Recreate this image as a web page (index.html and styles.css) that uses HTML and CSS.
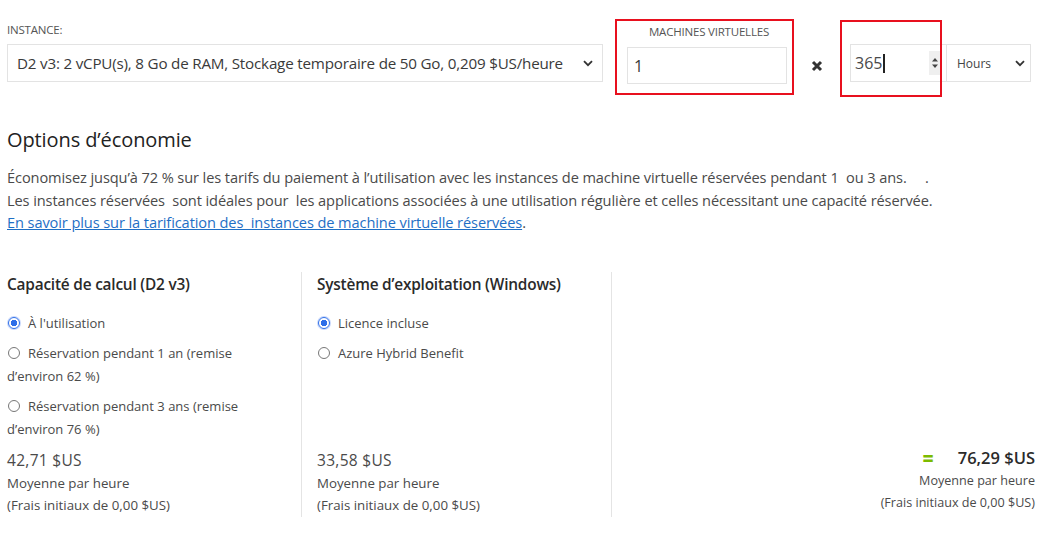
FILE: index.html
```html
<!DOCTYPE html>
<html lang="fr">
<head>
<meta charset="utf-8">
<title>Options d'économie</title>
<link rel="stylesheet" href="styles.css">
</head>
<body>
<div class="page">
  <div class="top">
    <div class="instance">
      <div class="label">INSTANCE:</div>
      <div class="select wide">
        <span class="sel-text">D2 v3: 2 vCPU(s), 8 Go de RAM, Stockage temporaire de 50 Go, 0,209 $US/heure</span>
        <svg class="chev" width="10" height="7" viewBox="0 0 10 7"><path d="M1 1.2 L5 5.2 L9 1.2" fill="none" stroke="#333" stroke-width="1.8"/></svg>
      </div>
    </div>
    <div class="vm-box">
      <div class="label center">MACHINES VIRTUELLES</div>
      <div class="input vm-input">1</div>
    </div>
    <div class="times">
      <svg width="12" height="12" viewBox="0 0 12 12"><path d="M2 2 L10 10 M10 2 L2 10" stroke="#333" stroke-width="3"/></svg>
    </div>
    <div class="dur">
      <div class="input num-input">
        <span>365</span><span class="caret"></span>
        <span class="spin">
          <svg width="8" height="14" viewBox="0 0 8 14"><path d="M1 5.5 L4 2 L7 5.5 Z M1 8.5 L4 12 L7 8.5 Z" fill="#444"/></svg>
        </span>
      </div>
      <div class="select hours">
        <span class="sel-text small">Hours</span>
        <svg class="chev" width="10" height="7" viewBox="0 0 10 7"><path d="M1 1.2 L5 5.2 L9 1.2" fill="none" stroke="#333" stroke-width="1.8"/></svg>
      </div>
      <div class="mark"></div>
    </div>
  </div>

  <h2 class="title">Options d’économie</h2>
  <p class="intro">
    Économisez jusqu’à 72 % sur les tarifs du paiement à l’utilisation avec les instances de machine virtuelle réservées pendant 1&nbsp; ou 3 ans.&nbsp;&nbsp;&nbsp;&nbsp; .<br>
    Les instances réservées&nbsp; sont idéales pour&nbsp; les applications associées à une utilisation régulière et celles nécessitant une capacité réservée.<br>
    <a href="#">En savoir plus sur la tarification des&nbsp; instances de machine virtuelle réservées</a>.
  </p>

  <div class="cols">
    <div class="col first">
      <h3>Capacité de calcul (D2 v3)</h3>
      <div class="opt"><span class="radio on"></span><span>À l'utilisation</span></div>
      <div class="opt wrap"><span class="radio"></span><span>Réservation pendant 1 an (remise</span></div>
      <div class="opt cont">d’environ 62 %)</div>
      <div class="opt wrap"><span class="radio"></span><span>Réservation pendant 3 ans (remise</span></div>
      <div class="opt cont">d’environ 76 %)</div>
      <div class="price">
        <div class="amount">42,71 $US</div>
        <div>Moyenne par heure</div>
        <div>(Frais initiaux de 0,00 $US)</div>
      </div>
    </div>
    <div class="col">
      <h3>Système d’exploitation (Windows)</h3>
      <div class="opt"><span class="radio on"></span><span>Licence incluse</span></div>
      <div class="opt"><span class="radio"></span><span>Azure Hybrid Benefit</span></div>
      <div class="price">
        <div class="amount">33,58 $US</div>
        <div>Moyenne par heure</div>
        <div>(Frais initiaux de 0,00 $US)</div>
      </div>
    </div>
    <div class="total">
      <div class="total-line"><span class="eq">=</span><span class="total-amount">76,29 $US</span></div>
      <div>Moyenne par heure</div>
      <div>(Frais initiaux de 0,00 $US)</div>
    </div>
  </div>
</div>
</body>
</html>
```
FILE: styles.css
```css
html, body {
  margin: 0;
  padding: 0;
  background: #fff;
}
body {
  font-family: "Open Sans", "Noto Sans", "Liberation Sans", sans-serif;
  color: #444;
  font-size: 13px;
}
.page {
  width: 1045px;
  height: 548px;
  overflow: hidden;
  position: relative;
}
.top {
  display: flex;
  align-items: flex-start;
  padding: 19px 0 0 7px;
  height: 78px;
}
.label {
  font-size: 11.5px;
  letter-spacing: -0.2px;
  color: #555;
  line-height: 14px;
}
.label.center { text-align: center; }
.instance {
  width: 596px;
  padding-top: 4px;
}
.instance .label { margin-bottom: 7px; }
.select {
  display: flex;
  align-items: center;
  justify-content: space-between;
  border: 1px solid #e3e3e3;
  box-sizing: border-box;
  height: 38px;
  background: #fff;
}
.select.wide {
  padding: 0 9px 0 9px;
}
.sel-text {
  font-size: 15.2px;
  color: #3a3a3a;
  letter-spacing: -0.2px;
  white-space: nowrap;
}
.sel-text.small { font-size: 12px; color: #444; letter-spacing: 0; }
.vm-box {
  margin-left: 12px;
  border: 2px solid #e8101e;
  width: 179px;
  height: 76px;
  box-sizing: border-box;
  padding: 4px 5px 0 10px;
}
.vm-box .label { padding-left: 4px; margin-bottom: 8px; white-space: nowrap; }
.input {
  border: 1px solid #e3e3e3;
  box-sizing: border-box;
  height: 37px;
  display: flex;
  align-items: center;
  font-size: 16px;
  color: #3a3a3a;
}
.vm-input {
  width: 160px;
  padding-left: 6px;
}
.times {
  width: 46px;
  padding-top: 41px;
  display: flex;
  justify-content: center;
}
.dur {
  margin-left: 10px;
  margin-top: 25px;
  display: flex;
  position: relative;
}
.num-input {
  width: 97px;
  height: 38px;
  padding-left: 4px;
  position: relative;
  font-size: 16px;
  color: #4a4a4a;
}
.caret {
  display: inline-block;
  width: 1.5px;
  height: 19px;
  background: #222;
  margin-left: 1px;
}
.spin {
  position: absolute;
  right: 5px;
  top: 6px;
  width: 12px;
  height: 24px;
  background: #efefef;
  display: flex;
  align-items: center;
  justify-content: center;
}
.hours {
  width: 84px;
  padding: 0 5px 0 10px;
  border-left: none;
}
.mark {
  position: absolute;
  left: -10px;
  top: -24px;
  width: 102px;
  height: 77px;
  border: 2px solid #e8101e;
  box-sizing: border-box;
  pointer-events: none;
}
.title {
  margin: 30px 0 0 7px;
  font-size: 20px;
  font-weight: 400;
  color: #222;
  line-height: 26px;
  letter-spacing: -0.1px;
}
.intro {
  margin: 13px 0 0 7px;
  font-size: 14.6px;
  line-height: 22.5px;
  color: #4a4a4a;
  letter-spacing: -0.1px;
}
.intro a {
  color: #1f6fc5;
  text-decoration: underline;
}
.cols {
  display: flex;
  margin-top: 38px;
  height: 245px;
}
.col {
  display: flex;
  flex-direction: column;
  width: 294px;
  padding-left: 15px;
  border-right: 1px solid #e4e4e4;
  font-size: 13px;
  color: #4a4a4a;
}
.col.first {
  width: 294px;
  padding-left: 7px;
}
.col h3 {
  margin: 2px 0 16px 0;
  font-size: 15.4px;
  font-weight: 600;
  color: #2a2a2a;
  line-height: 22px;
  letter-spacing: -0.2px;
}
.opt {
  display: flex;
  align-items: center;
  gap: 8px;
  line-height: 23px;
  margin-bottom: 7px;
}
.opt.wrap { margin-bottom: 0; }
.opt.cont { display: block; }
.radio {
  width: 12px;
  height: 12px;
  border: 1px solid #777;
  border-radius: 50%;
  box-sizing: border-box;
  flex: none;
  margin-left: 1px;
}
.radio.on {
  border: 1.5px solid #2f6fe8;
  background: radial-gradient(circle, #2f6fe8 0 3px, #fff 3.5px);
  box-shadow: 0 0 0 1px #c9d8fb;
}
.price {
  margin-top: auto;
  margin-bottom: 1px;
  line-height: 22px;
  font-size: 13.3px;
}
.price .amount {
  font-size: 15.5px;
  margin-bottom: 1px;
  letter-spacing: 0.3px;
}
.total {
  flex: 1;
  display: flex;
  flex-direction: column;
  justify-content: flex-end;
  align-items: flex-end;
  padding-right: 10px;
  font-size: 12.6px;
  color: #4a4a4a;
  line-height: 22px;
  padding-bottom: 3px;
}
.total-line {
  display: flex;
  align-items: center;
  margin-bottom: 1px;
}
.eq {
  color: #7cbb00;
  font-weight: 800;
  font-size: 19px;
  margin-right: 24px;
}
.total-amount {
  font-size: 16.5px;
  font-weight: 600;
  color: #2a2a2a;
}
```
